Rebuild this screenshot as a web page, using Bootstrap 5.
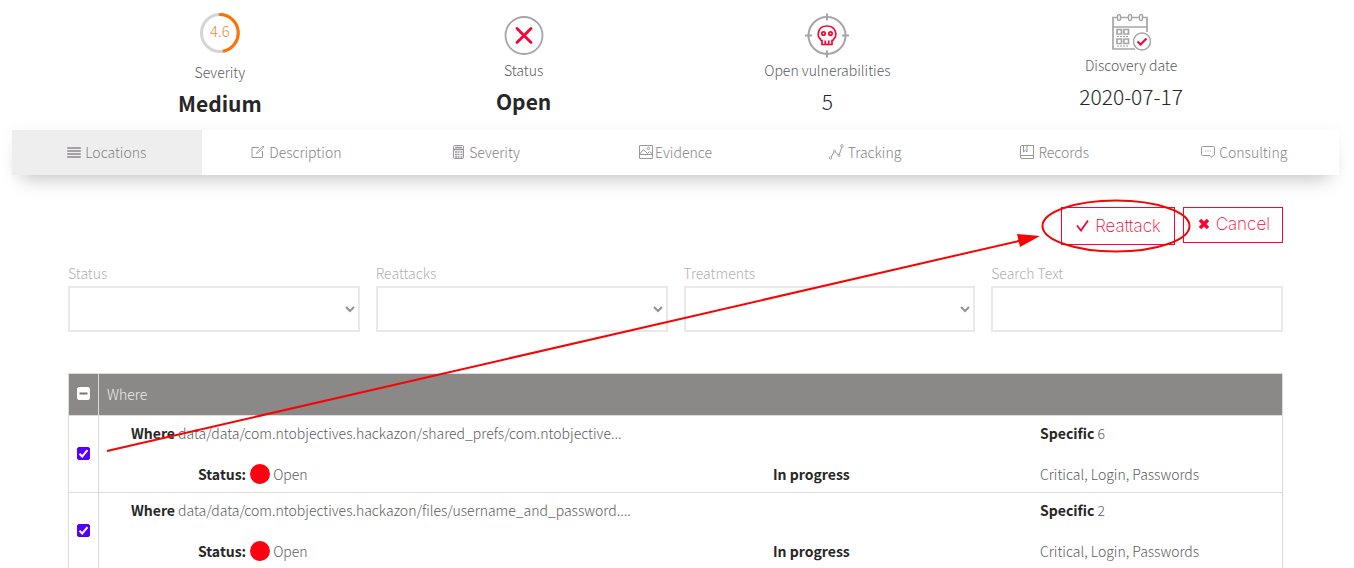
<!DOCTYPE html>
<html lang="en">
<head>
<meta charset="utf-8">
<meta name="viewport" content="width=device-width, initial-scale=1">
<title>Finding locations</title>
<link href="https://cdn.jsdelivr.net/npm/bootstrap@5.3.0/dist/css/bootstrap.min.css" rel="stylesheet">
<style>
  body { font-family: "Noto Sans CJK SC", "Noto Sans", sans-serif; font-weight: 300; font-size: 14px; line-height: 22px; color: #5c5c60; background: #fff; }
  strong { font-weight: 700; color: #272727; }
  .page-shell { padding: 13px 15px 0 12px; }
  .page-inner { padding: 0 56px; }
  .fact-icon { height: 46px; }
  .fact-icon.tall { height: 48px; }
  .fact-icon.short { height: 41px; }
  .fact-value { font-size: 21px; line-height: 30px; margin-top: 5px; color: #272727; }
  .gauge-text { font-size: 15px; fill: #f58a32; }
  .tab-strip { margin-top: 12px; background: #fff; box-shadow: 0 14px 20px -10px rgba(0,0,0,.22), 0 0 16px rgba(0,0,0,.04); }
  .tab-strip .nav-link { height: 45px; padding: 0 0 2px; gap: 4px; color: #868387; border-radius: 0; }
  .tab-strip .nav-link.tight { gap: 2px; }
  .tab-strip .nav-link.active { background: #eee; }
  .tab-strip svg { fill: none; stroke: #9a979b; }
  .action-row { margin-top: 32px; }
  .btn-outline-red { border: 1px solid #ff0033; border-radius: 0; color: #ff0033; font-family: Inter, "Open Sans", sans-serif; font-weight: 200; font-size: 17px; line-height: 24px; padding: 4px 12px 6px; }
  .btn-outline-red.tall { padding: 6px 13px; }
  .ring-mark { position: absolute; left: 50%; top: 50%; width: 150px; height: 54px; transform: translate(-50%, -50%); pointer-events: none; margin-left: -2px; }
  .filter-grid { margin-top: 17px; }
  .filter-grid label { color: #b1b1b1; display: block; margin-bottom: 2px; }
  .field-box { height: 46px; border: 2px solid #e9e9e9; border-radius: 0; }
  select.field-box { background: #fff url("data:image/svg+xml,%3Csvg xmlns='http://www.w3.org/2000/svg' viewBox='0 0 10 7'%3E%3Cpath d='M1 1l4 4 4-4' fill='none' stroke='%23929292' stroke-width='2'/%3E%3C/svg%3E") no-repeat right 3px center / 10px 7px; }
  .finding-table { margin: 41px 0 0; table-layout: fixed; border-color: #dcdcdc; color: inherit; }
  .finding-table th, .finding-table td { vertical-align: middle; }
  .finding-table thead th { background: #8b8888; color: #ededed; font-weight: 300; height: 42px; padding: 0 8px 2px; }
  .finding-table tbody td { background: #fff; color: inherit; padding: 6px 0 7px; }
  .finding-table tr .pick { width: 30px; padding: 0 0 2px; text-align: center; }
  .pick .form-check-input { width: 13px; height: 13px; border-radius: 2px; display: block; margin: auto; }
  .pick .form-check-input:checked { background-color: #5500ff; border-color: #5500ff; background-image: url("data:image/svg+xml,%3Csvg xmlns='http://www.w3.org/2000/svg' viewBox='0 0 11 11'%3E%3Cpath d='M1.500 5.800l2.700 2.700L9.500 2.200' fill='none' stroke='%23fff' stroke-width='2'/%3E%3C/svg%3E"); }
  .pick .form-check-input:indeterminate { background-color: #fff; border-color: #fff; background-image: url("data:image/svg+xml,%3Csvg xmlns='http://www.w3.org/2000/svg' viewBox='0 0 11 11'%3E%3Cpath d='M1.500 5.500h8' stroke='%23777' stroke-width='2'/%3E%3C/svg%3E"); }
  .line-grid { display: grid; grid-template-columns: 32px 67fr 575fr 267fr 242fr; row-gap: 19px; white-space: nowrap; }
  .path-text { grid-column: 2 / 5; }
  .state-text { grid-column: 3; }
  .open-dot { width: 20px; height: 20px; border-radius: 50%; background: #ff0011; margin: 0 3px 0 4px; }
  .arrow-mark { position: absolute; left: 0; top: 0; width: 100%; height: 260px; pointer-events: none; }
</style>
</head>
<body>
<main class="page-shell">
  <section class="page-inner">
    <div class="row g-0 text-center">
      <div class="col-3">
        <div class="fact-icon tall">
          <svg width="40" height="40" viewBox="0 0 40 40" class="d-block mx-auto" role="img" aria-label="Score 4.6">
            <circle cx="20" cy="20" r="18.500" fill="none" stroke="#d5d5d5" stroke-width="3"/>
            <path d="M20 1.500A18.500 18.500 0 0 1 24 38" fill="none" stroke="#ff7300" stroke-width="3" stroke-linecap="round"/>
            <text x="20" y="24" text-anchor="middle" class="gauge-text">4.6</text>
          </svg>
        </div>
        <div>Severity</div>
        <div class="fact-value"><strong>Medium</strong></div>
      </div>
      <div class="col-3">
        <div class="fact-icon">
          <svg width="44" height="44" viewBox="0 0 44 44" class="d-block mx-auto" aria-hidden="true">
            <circle cx="22" cy="22.500" r="18.500" fill="none" stroke="#a6a6a6" stroke-width="1.800"/>
            <path d="M15 15.500l14 14M29 15.500l-14 14" stroke="#ff0033" stroke-width="2.800" stroke-linecap="round"/>
          </svg>
        </div>
        <div>Status</div>
        <div class="fact-value"><strong>Open</strong></div>
      </div>
      <div class="col-3">
        <div class="fact-icon">
          <svg width="46" height="46" viewBox="0 0 46 46" class="d-block mx-auto" fill="none" aria-hidden="true">
            <g stroke="#a6a6a6" stroke-width="2"><circle cx="23" cy="22.500" r="18.500"/><path d="M23 .5v7M23 37.500v7M1 22.500h7M38 22.500h7"/></g>
            <g stroke="#ff0033" stroke-width="1.700"><path d="M18 27.500c-1.500 0-1.500-1-2-2-3-2-3-12.500 7-12.500s10 10.500 7 12.500c-.5 1-.5 2-2 2V31.500H18zM21.300 27.500v4M24.700 27.500v4"/><circle cx="19.500" cy="20.500" r="1.700"/><circle cx="26.500" cy="20.500" r="1.700"/></g>
          </svg>
        </div>
        <div>Open vulnerabilities</div>
        <div class="fact-value">5</div>
      </div>
      <div class="col-3">
        <div class="fact-icon short">
          <svg width="40" height="40" viewBox="0 0 40 40" class="d-block mx-auto" fill="none" aria-hidden="true">
            <g stroke="#a6a6a6" stroke-width="1.700">
              <path d="M24 36H2V4.500h34V19M2 14h34"/>
              <g fill="#fff" stroke-width="1.400"><rect x="6.500" y="1.500" width="3" height="6" rx="1.500"/><rect x="17.500" y="1.500" width="3" height="6" rx="1.500"/><rect x="28.500" y="1.500" width="3" height="6" rx="1.500"/></g>
              <path stroke-width="1.700" d="M6 16.500h4.500v4.500H6zM13 16.500h4.500v4.500H13zM6 26h4.500v4.500H6zM13 26h4.500v4.500H13z"/>
              <path stroke-width="1.200" stroke-dasharray="2 1" d="M6 23.500h12M6 33h12"/>
              <circle cx="31" cy="28.500" r="8.500" fill="#fff" stroke-width="1.500"/>
            </g>
            <path d="M26.500 28.500l3 3 6-6" stroke="#ff0033" stroke-width="2"/>
          </svg>
        </div>
        <div>Discovery date</div>
        <div class="fact-value">2020-07-17</div>
      </div>
    </div>
  </section>

  <nav class="nav nav-fill tab-strip" aria-label="Finding sections">
    <div class="row g-0 w-100 flex-nowrap">
      <div class="col"><a href="#" class="nav-link active d-flex align-items-center justify-content-center" aria-current="page"><svg width="14" height="14" viewBox="0 0 14 14" aria-hidden="true"><path d="M.5 2.500h13v1H.5zM.5 5.500h13v1H.5zM.5 8.500h13v1H.5zM.5 11.500h13v1H.5z" stroke-width=".9"/></svg>Locations</a></div>
      <div class="col"><a href="#" class="nav-link d-flex align-items-center justify-content-center"><svg width="14" height="14" viewBox="0 0 14 14" aria-hidden="true"><path d="M8 2.500H1v10h10.500V6"/><path d="M5.500 8.500l.8-2L12 1l1 1-5.500 5.500z" stroke-width=".9"/></svg>Description</a></div>
      <div class="col"><a href="#" class="nav-link d-flex align-items-center justify-content-center"><svg width="13" height="14" viewBox="0 0 13 14" aria-hidden="true"><rect x="1.500" y=".5" width="10" height="13" rx="1"/><path d="M3 2.500h7M1.500 4.500h10" stroke-width="1.500"/><path d="M3 7h2M5.500 7h2M8.500 7h2M3 9.500h2M5.500 9.500h2M8.500 9.500h2M3 12h2M5.500 12h2M8.500 12h2" stroke-width="1.300"/></svg>Severity</a></div>
      <div class="col"><a href="#" class="nav-link tight d-flex align-items-center justify-content-center"><svg width="14" height="14" viewBox="0 0 14 14" aria-hidden="true"><path d="M.5.5h13v13H.5zM.5 9.500h13M.5 9l4-4.500 4 4 2-2 3 2.500"/><circle cx="9.500" cy="3.500" r="1.200"/></svg>Evidence</a></div>
      <div class="col"><a href="#" class="nav-link d-flex align-items-center justify-content-center"><svg width="15" height="16" viewBox="0 0 15 16" aria-hidden="true"><path d="M2 13.500L5.500 7l4.500 4.500 3-9"/><g fill="#fff" stroke-width=".8"><circle cx="1.500" cy="14" r="1.200"/><circle cx="5.500" cy="7" r="1"/><circle cx="10" cy="11.500" r="1"/><circle cx="13" cy="2" r="1.300"/></g></svg>Tracking</a></div>
      <div class="col"><a href="#" class="nav-link d-flex align-items-center justify-content-center"><svg width="14" height="14" viewBox="0 0 14 14" aria-hidden="true"><path d="M2 .5h11.500v13H2a1.500 1.500 0 0 1-1.500-1.500V2A1.500 1.500 0 0 1 2 .5M1 10.500h12.500M3.500.5V7l1.700-1.500L7 7V.5"/></svg>Records</a></div>
      <div class="col"><a href="#" class="nav-link d-flex align-items-center justify-content-center"><svg width="14" height="14" viewBox="0 0 14 14" aria-hidden="true"><path d="M1.500 1.500h11a1 1 0 0 1 1 1v7a1 1 0 0 1-1 1H12l-1.500 2-1.500-2H1.500a1 1 0 0 1-1-1v-7a1 1 0 0 1 1-1z"/><path d="M4 6h1M6.500 6h1M9 6h1"/></svg>Consulting</a></div>
    </div>
  </nav>

  <section class="page-inner">
    <div class="position-relative">
      <div class="action-row d-flex justify-content-end align-items-start gap-2">
        <div class="position-relative">
          <button type="button" class="btn btn-outline-red tall d-flex align-items-center gap-1"><svg width="16" height="16" viewBox="0 0 16 16" fill="none" aria-hidden="true"><path d="M2 7.500l4 5L13 2.500" stroke="#ff0033" stroke-width="1.800"/></svg>Reattack</button>
          <svg class="ring-mark" viewBox="0 0 150 54" aria-hidden="true"><ellipse cx="75" cy="27" rx="73.500" ry="25.500" fill="none" stroke="#f60505" stroke-width="2"/></svg>
        </div>
        <button type="button" class="btn btn-outline-red d-flex align-items-center gap-1"><svg width="16" height="16" viewBox="0 0 16 16" fill="none" aria-hidden="true"><path d="M4 4l8 8M12 4l-8 8" stroke="#ff0033" stroke-width="3.500"/></svg>Cancel</button>
      </div>

      <form class="filter-grid row row-cols-4 gx-3">
        <div class="col"><label for="f-status">Status</label><select id="f-status" class="form-select field-box"><option></option><option>Open</option><option>Closed</option></select></div>
        <div class="col"><label for="f-reattacks">Reattacks</label><select id="f-reattacks" class="form-select field-box"><option></option><option>Requested</option></select></div>
        <div class="col"><label for="f-treatments">Treatments</label><select id="f-treatments" class="form-select field-box"><option></option><option>In progress</option></select></div>
        <div class="col"><label for="f-search">Search Text</label><input id="f-search" type="text" class="form-control field-box"></div>
      </form>

      <svg class="arrow-mark" viewBox="0 0 1215 260" preserveAspectRatio="none" aria-hidden="true">
        <path d="M39 244L955 33" stroke="#f60505" stroke-width="2" fill="none"/>
        <path d="M972 29L949 27l3 13z" fill="#f60505"/>
      </svg>

      <table class="table table-bordered finding-table">
        <thead>
          <tr><th class="pick" scope="col"><input id="pick-all" class="form-check-input" type="checkbox" aria-label="Select all"></th><th scope="col">Where</th></tr>
        </thead>
        <tbody>
          <tr>
            <td class="pick"><input class="form-check-input" type="checkbox" checked aria-label="Select location 1"></td>
            <td><div class="line-grid">
              <div class="path-text"><strong>Where</strong> data/data/com.ntobjectives.hackazon/shared_prefs/com.ntobjective...</div>
              <div><strong>Specific</strong> 6</div>
              <div class="state-text d-flex align-items-center"><strong>Status:</strong><span class="open-dot"></span>Open</div>
              <div><strong>In progress</strong></div>
              <div>Critical, Login, Passwords</div>
            </div></td>
          </tr>
          <tr>
            <td class="pick"><input class="form-check-input" type="checkbox" checked aria-label="Select location 2"></td>
            <td><div class="line-grid">
              <div class="path-text"><strong>Where</strong> data/data/com.ntobjectives.hackazon/files/username_and_password....</div>
              <div><strong>Specific</strong> 2</div>
              <div class="state-text d-flex align-items-center"><strong>Status:</strong><span class="open-dot"></span>Open</div>
              <div><strong>In progress</strong></div>
              <div>Critical, Login, Passwords</div>
            </div></td>
          </tr>
        </tbody>
      </table>
    </div>
  </section>
</main>
<script src="https://cdn.jsdelivr.net/npm/bootstrap@5.3.0/dist/js/bootstrap.bundle.min.js"></script>
<script>
  document.getElementById('pick-all').indeterminate = true;
</script>
</body>
</html>
